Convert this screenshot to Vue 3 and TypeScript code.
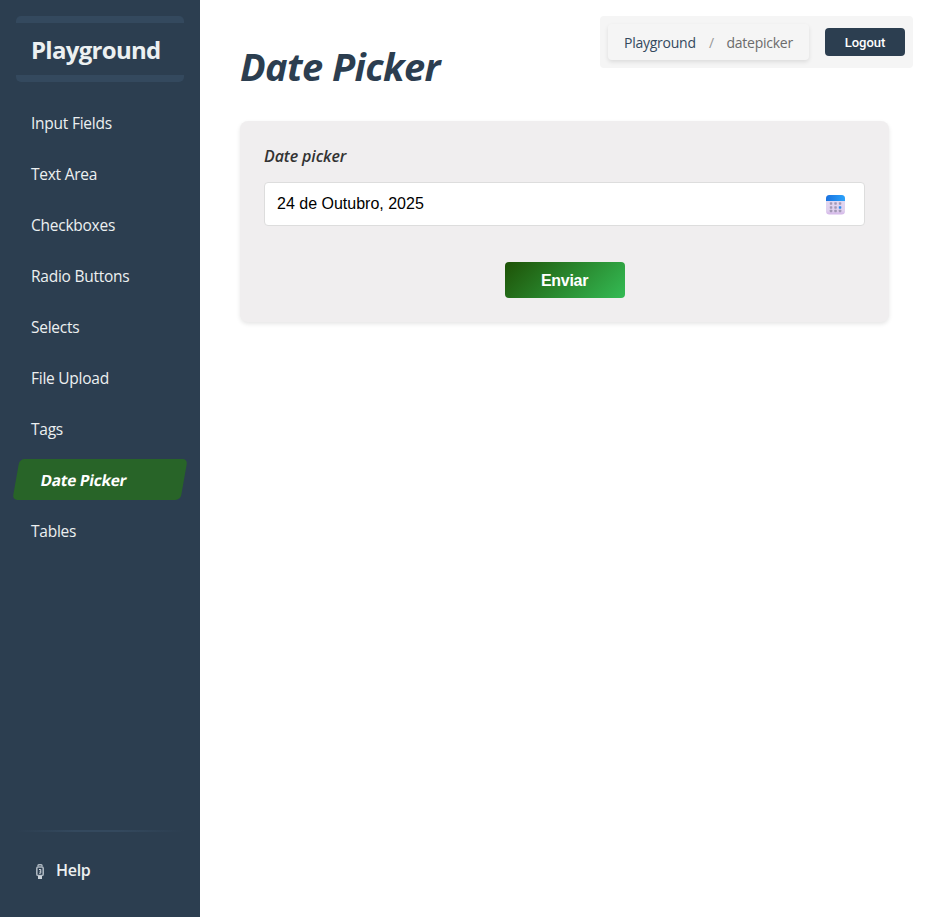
<script setup lang="ts">
import { ref } from 'vue'

interface NavItem {
  label: string
  active?: boolean
}

const items: NavItem[] = [
  { label: 'Input Fields' },
  { label: 'Text Area' },
  { label: 'Checkboxes' },
  { label: 'Radio Buttons' },
  { label: 'Selects' },
  { label: 'File Upload' },
  { label: 'Tags' },
  { label: 'Date Picker', active: true },
  { label: 'Tables' },
]

const dateValue = ref('24 de Outubro, 2025')
const dotRows = [9.2, 13.2, 16.7]
const dotCols = [6, 10.5, 15]
</script>

<template>
  <div class="layout">
    <aside class="sidebar">
      <h2 class="brand"><span>Playground</span></h2>
      <nav class="menu">
        <a v-for="item in items" :key="item.label" class="item" :class="{ active: item.active }">
          <span>{{ item.label }}</span>
        </a>
      </nav>
      <div class="footer">
        <div class="divider"></div>
        <a class="help">
          <svg class="help-icon" width="8" height="16" viewBox="0 0 8 16">
            <path d="M2 2.500V1.600Q2 .8 2.800.8h2.400Q6 .8 6 1.600V2.500" fill="none" stroke="#aeb8c2" stroke-width="1.400" />
            <rect x=".8" y="3" width="6.400" height="8.500" rx="1.300" fill="#2c3e50" stroke="#aab4be" stroke-width="1.600" />
            <path d="M3 5.500h1.800v3.700H3M3.600 7.300h1" fill="none" stroke="#d4dae0" stroke-width="1" />
            <path d="M2 11.500h4V15H2z" fill="#cbd2d9" />
          </svg>
          <span>Help</span>
        </a>
      </div>
    </aside>

    <main class="content">
      <header class="topbar">
        <h1 class="title"><span>Date Picker</span></h1>
        <div class="tools">
          <div class="crumbs">
            <a class="crumb-root">Playground</a>
            <span class="slash">/</span>
            <span class="crumb-page">datepicker</span>
          </div>
          <button class="logout" type="button">Logout</button>
        </div>
      </header>

      <form class="card" @submit.prevent>
        <label class="label" for="date"><span>Date picker</span></label>
        <div class="field">
          <input id="date" v-model="dateValue" class="input" type="text" readonly />
          <svg class="calendar" width="20" height="21" viewBox="0 0 20 21">
            <defs>
              <linearGradient id="calBody" x1="0" y1="0" x2="0" y2="1">
                <stop offset="0" stop-color="#e3dcf2" />
                <stop offset=".8" stop-color="#e0d0ee" />
                <stop offset="1" stop-color="#d3b5e8" />
              </linearGradient>
              <linearGradient id="calHead" x1="0" y1="0" x2="1" y2="0">
                <stop offset="0" stop-color="#1a72df" />
                <stop offset="1" stop-color="#2aa3fb" />
              </linearGradient>
            </defs>
            <rect x="1" y="1" width="19" height="19.500" rx="3.500" fill="url(#calBody)" />
            <path d="M1 7V4.500A3.500 3.500 0 0 1 4.500 1h12A3.500 3.500 0 0 1 20 4.500V7z" fill="url(#calHead)" />
            <template v-for="(y, r) in dotRows" :key="r">
              <rect
                v-for="(x, c) in dotCols"
                :key="c"
                :x="x - 1.200"
                :y="y - 1"
                width="2.500"
                height="2.500"
                rx=".6"
                :fill="r === 1 && c === 2 ? '#2a8cf0' : '#a398b5'"
              />
            </template>
          </svg>
        </div>
        <button class="submit" type="submit">Enviar</button>
      </form>
    </main>
  </div>
</template>

<style>
body {
  margin: 0;
  background: #fff;
}
</style>

<style scoped>
.layout {
  display: flex;
  height: 917px;
  font-family: 'Segoe UI', 'Open Sans', 'Noto Sans', sans-serif;
  font-size: 16px;
}
.sidebar {
  box-sizing: border-box;
  width: 200px;
  flex: none;
  display: flex;
  flex-direction: column;
  padding: 16px;
  background: #2c3e50;
  color: #ecf0f1;
}
.brand {
  box-sizing: border-box;
  height: 66px;
  margin: 0 0 20px;
  padding-left: 15px;
  border-top: 7px solid #34495e;
  border-bottom: 7px solid #34495e;
  border-radius: 5px;
  font-size: 24px;
  line-height: 54px;
  font-weight: 700;
  letter-spacing: -0.7px;
}
.menu {
  display: flex;
  flex-direction: column;
  gap: 10px;
}
.item {
  box-sizing: border-box;
  height: 41px;
  padding-left: 15px;
  font-size: 15.500px;
  line-height: 43px;
  letter-spacing: -0.25px;
}
.item.active {
  padding-left: 25px;
  border-radius: 5px;
  background: #286428;
  color: #fff;
  font-weight: 700;
  letter-spacing: -0.3px;
  transform: skewX(-10deg);
}
.footer {
  margin-top: auto;
}
.divider {
  height: 2px;
  margin: 0 0 22px;
  background: linear-gradient(to right, transparent, #34495e 35%, #34495e 60%, transparent);
}
.help {
  display: flex;
  align-items: center;
  height: 31px;
  margin-bottom: 16px;
  padding-left: 20px;
  gap: 12px;
  font-size: 16px;
  font-weight: 600;
  letter-spacing: -0.3px;
}
.help-icon {
  position: relative;
  top: 2px;
}
.content {
  flex: 1;
  padding: 16px 40px 0;
}
.topbar {
  display: flex;
  justify-content: space-between;
  height: 105px;
  margin-right: -24px;
}
.title {
  margin: 22px 0 0;
  color: #2c3e50;
  font-size: 38px;
  font-style: italic;
  font-weight: 700;
  line-height: 56px;
  letter-spacing: -0.6px;
  white-space: nowrap;
}
.tools {
  box-sizing: border-box;
  display: flex;
  align-items: center;
  justify-content: space-between;
  width: 313px;
  height: 52px;
  padding: 8px;
  border-radius: 4px;
  background: #f5f5f5;
}
.crumbs {
  box-sizing: border-box;
  display: flex;
  width: 201px;
  height: 36px;
  padding-left: 16px;
  border-radius: 4px;
  box-shadow: 0 2px 4px rgba(0, 0, 0, 0.1);
  font-size: 14px;
  line-height: 38px;
  letter-spacing: -0.25px;
}
.crumb-root {
  width: 85px;
  color: #34495e;
}
.slash {
  width: 17.500px;
  color: #999;
}
.crumb-page {
  color: #6c6c6c;
}
.logout {
  width: 80px;
  height: 28px;
  padding: 0;
  border: 0;
  border-radius: 4px;
  background: #2c3e50;
  color: #fff;
  font: 500 13px Roboto, sans-serif;
  line-height: 29px;
}
.card {
  box-sizing: border-box;
  height: 201px;
  padding: 22px 24px 0;
  border-radius: 8px;
  background: #f0eeef;
  box-shadow: 0 2px 4px rgba(0, 0, 0, 0.1);
}
.label {
  display: block;
  height: 39px;
  color: #333;
  font-size: 16px;
  font-style: italic;
  font-weight: 600;
  line-height: 26px;
  letter-spacing: -0.1px;
}
.field {
  box-sizing: border-box;
  display: flex;
  align-items: center;
  height: 44px;
  padding: 0 19px 0 12px;
  border: 1px solid #ddd;
  border-radius: 4px;
  background: #fff;
}
.input {
  flex: 1;
  padding: 0;
  border: 0;
  outline: 0;
  background: transparent;
  color: #000;
  font: 16px 'Liberation Sans', sans-serif;
}
.submit {
  display: block;
  width: 120px;
  height: 36px;
  margin: 36px auto 0;
  padding: 1px 0 0;
  border: 0;
  border-radius: 4px;
  background: linear-gradient(135deg, #1e5206, #34bb54);
  color: #fff;
  font: 700 16px 'Liberation Sans', sans-serif;
  line-height: 35px;
  letter-spacing: -0.3px;
}
</style>
